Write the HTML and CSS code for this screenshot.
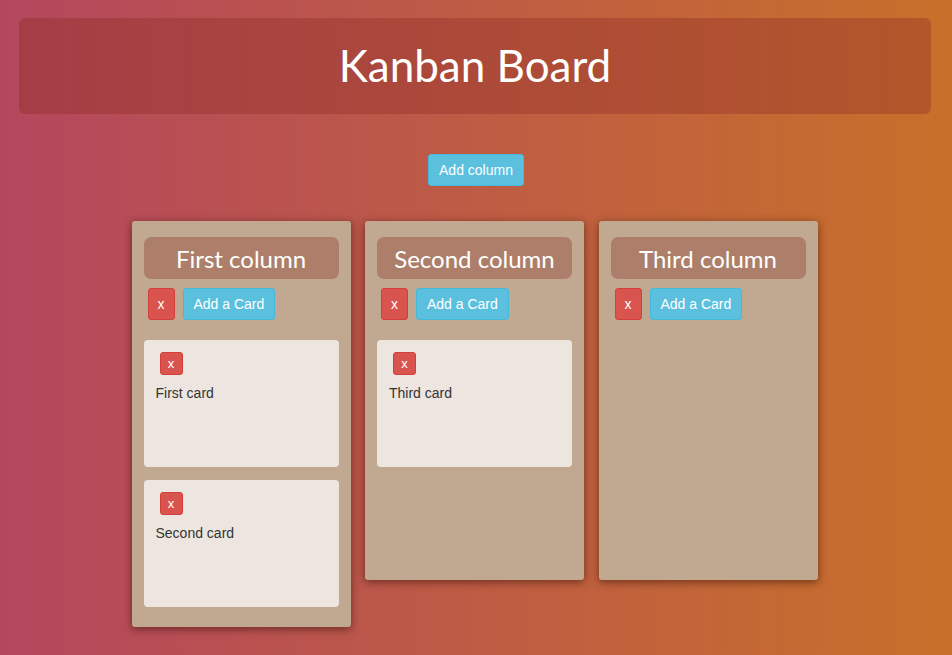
FILE: index.html
```html
<!DOCTYPE html>
<html>
<head>
<meta charset="utf-8">
<link rel="stylesheet" href="styles.css">
</head>
<body>
<header class="header"><h1 class="title">Kanban Board</h1></header>
<div class="toolbar"><button class="btn btn-info btn-main">Add column</button></div>
<main class="board">
  <section class="column">
    <h2 class="col-title">First column</h2>
    <div class="col-actions">
      <button class="btn btn-danger btn-col-x">x</button>
      <button class="btn btn-info btn-add">Add a Card</button>
    </div>
    <div class="cards">
      <div class="card"><button class="btn btn-danger btn-card-x">x</button><p class="card-text">First card</p></div>
      <div class="card"><button class="btn btn-danger btn-card-x">x</button><p class="card-text">Second card</p></div>
    </div>
  </section>
  <section class="column">
    <h2 class="col-title">Second column</h2>
    <div class="col-actions">
      <button class="btn btn-danger btn-col-x">x</button>
      <button class="btn btn-info btn-add">Add a Card</button>
    </div>
    <div class="cards">
      <div class="card"><button class="btn btn-danger btn-card-x">x</button><p class="card-text">Third card</p></div>
    </div>
  </section>
  <section class="column">
    <h2 class="col-title">Third column</h2>
    <div class="col-actions">
      <button class="btn btn-danger btn-col-x">x</button>
      <button class="btn btn-info btn-add">Add a Card</button>
    </div>
  </section>
</main>
</body>
</html>
```
FILE: styles.css
```css
html, body {
  margin: 0;
  padding: 0;
}
body {
  width: 952px;
  height: 655px;
  overflow: hidden;
  background: linear-gradient(to right, #b4475e 0%, #c8702a 100%);
  font-family: "Liberation Sans", Arial, sans-serif;
  font-size: 14px;
  color: #333;
}
.header {
  margin: 18px 21px 0 19px;
  height: 96px;
  border-radius: 6px;
  background: linear-gradient(to right, #a53d47 0%, #b3562a 100%);
  display: flex;
  align-items: center;
  justify-content: center;
}
.title {
  margin: 0;
  font-family: Lato, "Open Sans", sans-serif;
  font-weight: 400;
  font-size: 44px;
  color: #fff;
  line-height: 1;
  padding-bottom: 2px;
}
.toolbar {
  margin-top: 40px;
  display: flex;
  justify-content: center;
}
.btn {
  font-family: "Liberation Sans", Arial, sans-serif;
  font-size: 14px;
  line-height: 19px;
  color: #fff;
  border: 1px solid transparent;
  border-radius: 3px;
  cursor: pointer;
  margin: 0;
}
.btn-info {
  background: #5bc0de;
  border-color: #46b8da;
}
.btn-danger {
  background: #d9534f;
  border-color: #d43f3a;
}
.btn-main {
  padding: 5px 10px;
  height: 32px;
}
.board {
  margin-top: 35px;
  display: flex;
  justify-content: center;
  align-items: flex-start;
  gap: 14.5px;
  padding-right: 3px;
}
.column {
  box-sizing: border-box;
  width: 219px;
  min-height: 359px;
  padding: 16px 12px 20px;
  background: #c0a990;
  border-radius: 3px;
  box-shadow: 0 2px 8px rgba(40, 10, 0, 0.55);
}
.col-title {
  margin: 0;
  height: 42px;
  line-height: 44px;
  border-radius: 7px;
  background: #ad7f6a;
  color: #fff;
  text-align: center;
  font-family: Lato, "Open Sans", sans-serif;
  font-weight: 400;
  font-size: 24px;
}
.col-actions {
  margin-top: 9px;
  padding-left: 4px;
  display: flex;
  gap: 8px;
}
.btn-col-x {
  height: 32px;
  width: 27px;
  padding: 0;
}
.btn-add {
  height: 32px;
  padding: 0 10px;
}
.cards {
  margin-top: 20px;
  display: flex;
  flex-direction: column;
  gap: 13px;
}
.card {
  box-sizing: border-box;
  height: 127px;
  padding: 12px 12px;
  background: #ede6e0;
  border-radius: 4px;
}
.btn-card-x {
  display: block;
  margin-left: 4px;
  width: 23px;
  height: 23px;
  padding: 0;
  font-size: 13px;
  line-height: 19px;
}
.card-text {
  margin: 8px 0 0;
  font-size: 14px;
  line-height: 20px;
  color: #333;
}
```
